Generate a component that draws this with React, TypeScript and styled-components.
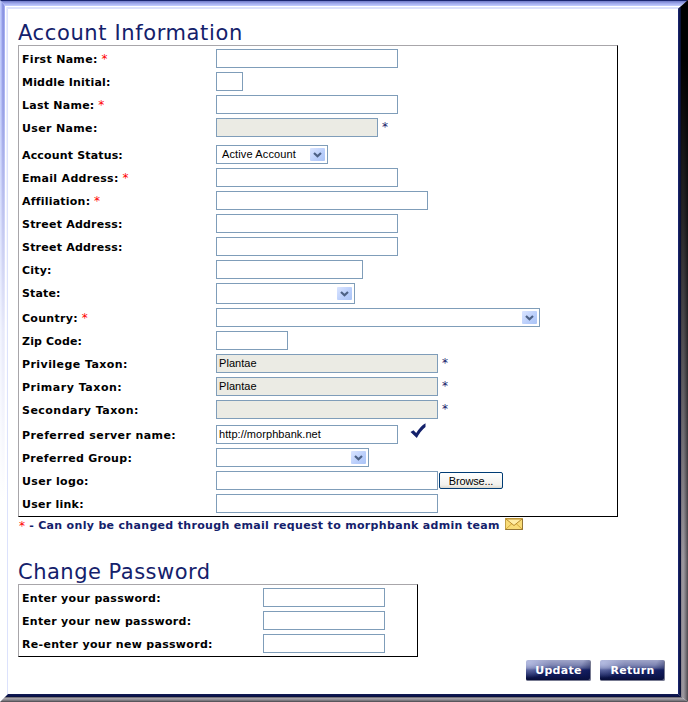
import React from 'react';
import styled, { createGlobalStyle, css } from 'styled-components';

const Global = createGlobalStyle`
  * { box-sizing: border-box; }
  body { margin: 0; background: #fff; }
`;

const Frame = styled.div`
  display: grid;
  grid-template-columns: 8px 670px 10px;
  grid-template-rows: 9px 685px 8px;
  width: 688px;
  height: 702px;
  overflow: hidden;
  background: #fff;
  font-family: Verdana, 'DejaVu Sans', sans-serif;
`;

const LeftBevel = styled.div`
  grid-area: 1 / 1 / 4 / 2;
  background:
    linear-gradient(to right, transparent 7px, #dce2fc 7px),
    linear-gradient(to bottom, rgba(255, 255, 255, 0) 0, rgba(255, 255, 255, 0.15) 110px, rgba(255, 255, 255, 0.8) 330px, #fff 500px),
    linear-gradient(to right, #bcc7fb 0 1px, #a9b3f3 1px 2px, #8e98e6 2px 3px, #8992e0 3px 4px, #a2acf0 4px 5px, #fff 5px 6px, #e8ecff 6px);
  clip-path: polygon(0 0, 8px 9px, 8px 694px, 0 702px);
`;

const TopBevel = styled.div`
  grid-area: 1 / 1 / 2 / 4;
  background: linear-gradient(to bottom, #1b2671 0 1px, #7883cf 1px 2px, #8c96df 2px 3px, #a0aaec 3px 4px, #aeb8f5 4px 5px, #bdc8fc 5px 6px, #fff 6px 7px, #dce2fc 7px 9px);
  clip-path: polygon(0 0, 100% 0, 678px 9px, 8px 9px);
`;

const RightBevel = styled.div`
  grid-area: 1 / 3 / 4 / 4;
  background:
    linear-gradient(to right, #18236b 0 1px, #10194f 1px 2px, #0b1238 2px 3px, transparent 3px),
    linear-gradient(to bottom, #000 60px, rgba(0, 0, 0, 0.75) 220px, rgba(0, 0, 0, 0) 560px),
    linear-gradient(to right, #85808a 3px, #a29da3 5px, #858188 7px, #4c494e 10px);
  clip-path: polygon(0 9px, 100% 0, 100% 100%, 0 694px);
`;

const BottomBevel = styled.div`
  grid-area: 3 / 1 / 4 / 4;
  background: linear-gradient(to bottom, #10194f 0 1px, #0b1450 1px 2px, #0a1140 2px 3px, #76727a 3px 4px, #a5a1a7 4px 5px, #949096 5px 6px, #7b787e 6px 7px, #59565c 7px);
  clip-path: polygon(8px 0, 678px 0, 100% 100%, 0 100%);
`;

const Content = styled.main`
  grid-area: 2 / 2 / 3 / 3;
  display: flex;
  flex-direction: column;
  align-items: flex-start;
  padding: 11px 12px 0 10px;
`;

const Heading = styled.h1<{ $track: number }>`
  height: 25px;
  margin: 0;
  color: #14216b;
  font: 400 21px/26px Verdana, 'DejaVu Sans', sans-serif;
  letter-spacing: ${p => p.$track}px;
  white-space: nowrap;
`;

const Panel = styled.section<{ $width: number; $height: number }>`
  width: ${p => p.$width}px;
  height: ${p => p.$height}px;
  padding: 3px 0 0 3px;
  border: 1px solid;
  border-color: #a8a6aa #000 #000 #a8a6aa;
`;

const Row = styled.div<{ $pitch: number; $labelWidth: number }>`
  display: grid;
  grid-template-columns: ${p => p.$labelWidth}px 1fr;
  align-items: start;
  height: ${p => p.$pitch}px;
`;

const Label = styled.label`
  color: #000;
  font: 700 11px/19px Verdana, 'DejaVu Sans', sans-serif;
  padding-top: 1px;
  white-space: nowrap;
`;

const Star = styled.span<{ $red?: boolean }>`
  color: ${p => (p.$red ? '#f00' : '#14216b')};
  font: 400 12px/18px Verdana, 'DejaVu Sans', sans-serif;
`;

const Controls = styled.div`
  display: flex;
  align-items: flex-start;
`;

const box = css`
  border: 1px solid #7f9db9;
  border-radius: 0;
  background: #fff;
  color: #000;
  font: 400 11px/15px 'Liberation Sans', Arial, sans-serif;
`;

const Field = styled.input<{ $width: number }>`
  ${box}
  width: ${p => p.$width}px;
  height: 19px;
  margin: 0;
  padding: 0 2px 2px;
  outline: 0;
  letter-spacing: 0.05px;
  &:disabled { background: #ebebe4; }
`;

const Select = styled.button<{ $width: number; $tall?: boolean }>`
  ${box}
  display: flex;
  align-items: center;
  justify-content: space-between;
  width: ${p => p.$width}px;
  height: ${p => (p.$tall ? 21 : 19)}px;
  padding: 0 2px 0 5px;
  letter-spacing: 0.13px;
`;

const Arrow = styled.span`
  display: flex;
  align-items: center;
  justify-content: center;
  width: 15px;
  height: 13px;
  border-radius: 1px;
  background: linear-gradient(135deg, #dbe5ff, #b9cefb 60%, #abc4f6);
`;

const Note = styled.span`
  padding-left: 4px;
  display: flex;
`;

const Tick = styled.svg`
  margin: -3px 0 0 12px;
`;

const Browse = styled.button`
  width: 64px;
  height: 17px;
  margin: 1px 0 0 1px;
  padding: 0;
  border: 1px solid #003c74;
  border-radius: 2px;
  background: linear-gradient(#fff, #f2f1ec 80%, #dcd8cd);
  color: #000;
  font: 400 11px/14px 'Liberation Sans', Arial, sans-serif;
  letter-spacing: -0.15px;
`;

const Hint = styled.p`
  display: flex;
  height: 42px;
  margin: 0 0 0 1px;
  color: #14216b;
  font: 700 11px/18px Verdana, 'DejaVu Sans', sans-serif;
  white-space: pre;
`;

const Envelope = styled.svg`
  margin: 1px 0 0 5px;
`;

const Actions = styled.div`
  display: flex;
  align-self: flex-end;
  gap: 9px;
  margin: 3px 1px 0 0;
`;

const Action = styled.button`
  width: 65px;
  height: 21px;
  padding: 0;
  border: 0;
  border-radius: 2px;
  background:
    radial-gradient(ellipse 22px 15px at 3px 3px, rgba(190, 198, 235, 0.75), rgba(150, 160, 210, 0)),
    linear-gradient(120deg, rgba(0, 0, 0, 0) 75%, rgba(10, 17, 70, 0.7)),
    linear-gradient(#a0a5c9 0, #8087b4 5px, #59639a 8px, #17236b 10px, #101a58 15px, #080e38 20px);
  box-shadow: inset -1px -1px #777a91;
  color: #fff;
  font: 700 11px/20px Verdana, 'DejaVu Sans', sans-serif;
`;

const Text = styled.span<{ $track?: number }>`
  letter-spacing: ${p => p.$track ?? 0.3}px;
`;

const Chevron = () => (
  <Arrow>
    <svg width="9" height="6" viewBox="0 0 9 6">
      <path d="M1 1 4.5 4.3 8 1" fill="none" stroke="#4d6185" strokeWidth="2.2" />
    </svg>
  </Arrow>
);

type Item = {
  label: string;
  width: number;
  track?: number;
  pitch?: number;
  kind?: 'select';
  tall?: boolean;
  required?: boolean;
  locked?: boolean;
  value?: string;
  extra?: 'tick' | 'browse';
};

const account: Item[] = [
  { label: 'First Name:', width: 182, required: true },
  { label: 'Middle Initial:', width: 27, track: 0.18 },
  { label: 'Last Name:', width: 182, required: true, track: 0.25 },
  { label: 'User Name:', width: 162, locked: true, pitch: 27, track: 0.35 },
  { label: 'Account Status:', width: 112, kind: 'select', value: 'Active Account', track: 0.16 },
  { label: 'Email Address:', width: 182, required: true },
  { label: 'Affiliation:', width: 212, required: true, track: 0.22 },
  { label: 'Street Address:', width: 182, track: 0.22 },
  { label: 'Street Address:', width: 182, track: 0.22 },
  { label: 'City:', width: 147, track: 0.2 },
  { label: 'State:', width: 139, kind: 'select', tall: true, pitch: 25, track: 0.15 },
  { label: 'Country:', width: 324, kind: 'select', required: true },
  { label: 'Zip Code:', width: 72, track: 0.15 },
  { label: 'Privilege Taxon:', width: 222, locked: true, value: 'Plantae', track: 0.43 },
  { label: 'Primary Taxon:', width: 222, locked: true, value: 'Plantae', track: 0.52 },
  { label: 'Secondary Taxon:', width: 222, locked: true, pitch: 25, track: 0.47 },
  { label: 'Preferred server name:', width: 182, value: 'http://morphbank.net', extra: 'tick', track: 0.41 },
  { label: 'Preferred Group:', width: 153, kind: 'select' },
  { label: 'User logo:', width: 222, extra: 'browse', track: 0.35 },
  { label: 'User link:', width: 222, track: 0.25 },
];

const passwords = ['Enter your password:', 'Enter your new password:', 'Re-enter your new password:'];

const FormRow = ({ item }: { item: Item }) => (
  <Row $pitch={item.pitch ?? 23} $labelWidth={194}>
    <Label>
      <Text $track={item.track}>{item.label}</Text>
      {item.required && <Star $red> *</Star>}
    </Label>
    <Controls>
      {item.kind === 'select' ? (
        <Select $width={item.width} $tall={item.tall}>
          <span>{item.value}</span>
          <Chevron />
        </Select>
      ) : (
        <Field $width={item.width} defaultValue={item.value} disabled={item.locked} />
      )}
      {item.locked && <Note><Star>*</Star></Note>}
      {item.extra === 'tick' && (
        <Tick width="17" height="17" viewBox="0 0 17 17">
          <path d="M.5 10 3.500 8.200 6.200 11Q10 4.500 15.500 1.200V5Q11 8.500 6.800 16Z" fill="#14216b" />
        </Tick>
      )}
      {item.extra === 'browse' && <Browse>Browse...</Browse>}
    </Controls>
  </Row>
);

export default function App() {
  return (
    <>
      <Global />
      <Frame>
        <LeftBevel />
        <TopBevel />
        <RightBevel />
        <BottomBevel />
        <Content>
          <Heading $track={0.62}>Account Information</Heading>
          <Panel $width={600} $height={472}>
            {account.map((item, i) => <FormRow key={i} item={item} />)}
          </Panel>
          <Hint>
            <Star $red>*</Star>
            <Text $track={0.32}> - Can only be changed through email request to morphbank admin team</Text>
            <Envelope width="18" height="12" viewBox="0 0 18 12">
              <rect x=".5" y=".5" width="17" height="11" fill="#f9dc77" stroke="#c2a047" />
              <path d="M1 11 7 5.500M17 11 11 5.500" stroke="#d5a83c" />
              <path d="M1 1 9 7.500 17 1Z" fill="#ffeda6" stroke="#b98b2b" />
              <path d="M.5 11.500H17.500V1" fill="none" stroke="#957635" />
            </Envelope>
          </Hint>
          <Heading $track={0.5}>Change Password</Heading>
          <Panel $width={400} $height={73}>
            {passwords.map(label => (
              <Row key={label} $pitch={23} $labelWidth={241}>
                <Label><Text>{label}</Text></Label>
                <Controls><Field type="password" $width={122} /></Controls>
              </Row>
            ))}
          </Panel>
          <Actions>
            <Action><Text>Update</Text></Action>
            <Action><Text>Return</Text></Action>
          </Actions>
        </Content>
      </Frame>
    </>
  );
}
